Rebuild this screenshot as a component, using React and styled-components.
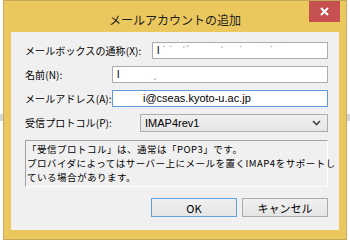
import styled, { createGlobalStyle } from "styled-components";

const GlobalStyle = createGlobalStyle`
  html, body {
    margin: 0;
    padding: 0;
    background: #ffffff;
  }
  body {
    font-family: "Noto Sans CJK JP", "Noto Sans", sans-serif;
  }
`;

const Desktop = styled.div`
  width: 350px;
  height: 243px;
  overflow: hidden;
  background: linear-gradient(
    to bottom,
    #ffffff 0 114px,
    #d6d6d6 114px 121px,
    #ffffff 121px
  );
`;

const Window = styled.div`
  margin-left: 3px;
  width: 344px;
  height: 240px;
  box-sizing: border-box;
  border: 1px solid #c2a95e;
  background: #eac85e;
  display: flex;
  flex-direction: column;
`;

const TitleBar = styled.div`
  height: 31px;
  display: grid;
  grid-template-columns: 1fr auto 1fr;
`;

const Title = styled.div`
  grid-column: 2;
  padding-top: 11px;
  font-size: 12px;
  line-height: 15px;
  color: #1f1f1f;
  white-space: nowrap;
`;

const CloseButton = styled.div`
  grid-column: 3;
  justify-self: end;
  align-self: start;
  margin-right: 6px;
  width: 31px;
  height: 21px;
  background: #c75050;
  display: flex;
  align-items: center;
  justify-content: center;
`;

const Client = styled.div`
  margin: 0 7px 9px 7px;
  flex: 1;
  background: #f0f0f0;
  padding: 10px 11px 0 14px;
  display: flex;
  flex-direction: column;
`;

const Row = styled.div`
  display: flex;
  align-items: center;
  height: 17px;
  margin-bottom: ${(p) => p.$gap}px;
`;

const Label = styled.div`
  width: ${(p) => p.$width}px;
  flex: none;
  font-size: 10px;
  letter-spacing: 0.1px;
  color: #000;
  white-space: nowrap;
`;

const Field = styled.div`
  flex: 1;
  height: 17px;
  box-sizing: border-box;
  background: #ffffff;
  border: 1px solid ${(p) => (p.$focused ? "#5c9de0" : "#abadb3")};
  font-family: "Liberation Sans", "Noto Sans CJK JP", sans-serif;
  font-size: 11px;
  line-height: 15px;
  padding-left: ${(p) => p.$indent || 4}px;
  color: #000;
  white-space: pre;
  overflow: hidden;
`;

const Select = styled.div`
  flex: 1;
  height: 18px;
  box-sizing: border-box;
  border: 1px solid #acacac;
  background: linear-gradient(to bottom, #f0f0f0, #e5e5e5);
  display: flex;
  align-items: center;
  justify-content: space-between;
  padding: 0 6px 0 4px;
  font-family: "Liberation Sans", sans-serif;
  font-size: 11px;
  color: #000;
`;

const InfoBox = styled.div`
  margin-top: 9px;
  height: 47px;
  box-sizing: border-box;
  border-top: 1px solid #a0a0a0;
  border-left: 1px solid #a0a0a0;
  border-right: 1px solid #ffffff;
  border-bottom: 1px solid #ffffff;
  padding: 2px 1px 0 1px;
  font-size: 9.5px;
  letter-spacing: 0.5px;
  line-height: 13.8px;
  color: #000;
  white-space: nowrap;
`;

const ButtonRow = styled.div`
  margin-top: 11px;
  display: flex;
  justify-content: flex-end;
  gap: 5px;
`;

const Button = styled.div`
  width: 86px;
  height: 19px;
  box-sizing: border-box;
  border: 1px solid ${(p) => (p.$primary ? "#5fa3e6" : "#acacac")};
  background: linear-gradient(to bottom, #f0f0f0, #e5e5e5);
  display: flex;
  align-items: center;
  justify-content: center;
  font-size: 11px;
  color: #000;
`;

const Dim = styled.span`
  color: #777;
`;

function App() {
  return (
    <>
      <GlobalStyle />
      <Desktop>
        <Window>
          <TitleBar>
            <Title>メールアカウントの追加</Title>
            <CloseButton>
              <svg width="9" height="9" viewBox="0 0 9 9">
                <path
                  d="M1 1 L8 8 M8 1 L1 8"
                  stroke="#ffffff"
                  strokeWidth="2"
                />
              </svg>
            </CloseButton>
          </TitleBar>
          <Client>
            <Row $gap={7}>
              <Label $width={127}>メールボックスの通称(X):</Label>
              <Field>
                {"l "}
                <Dim>{"˙ ˙   ˈˊ          ˈ     ˙         ˙"}</Dim>
              </Field>
            </Row>
            <Row $gap={7}>
              <Label $width={87}>名前(N):</Label>
              <Field>
                {"l"}
                <Dim>{"           ˏ"}</Dim>
              </Field>
            </Row>
            <Row $gap={7}>
              <Label $width={87}>メールアドレス(A):</Label>
              <Field $focused $indent={30}>
                i@cseas.kyoto-u.ac.jp
              </Field>
            </Row>
            <Row $gap={0}>
              <Label $width={115}>受信プロトコル(P):</Label>
              <Select>
                <span>IMAP4rev1</span>
                <svg width="9" height="6" viewBox="0 0 9 6">
                  <path
                    d="M1 1 L4.5 4.5 L8 1"
                    fill="none"
                    stroke="#444"
                    strokeWidth="1.6"
                  />
                </svg>
              </Select>
            </Row>
            <InfoBox>
              「受信プロトコル」は、通常は「POP3」です。
              <br />
              プロバイダによってはサーバー上にメールを置くIMAP4をサポートし
              <br />
              ている場合があります。
            </InfoBox>
            <ButtonRow>
              <Button $primary>OK</Button>
              <Button>キャンセル</Button>
            </ButtonRow>
          </Client>
        </Window>
      </Desktop>
    </>
  );
}

export default App;
